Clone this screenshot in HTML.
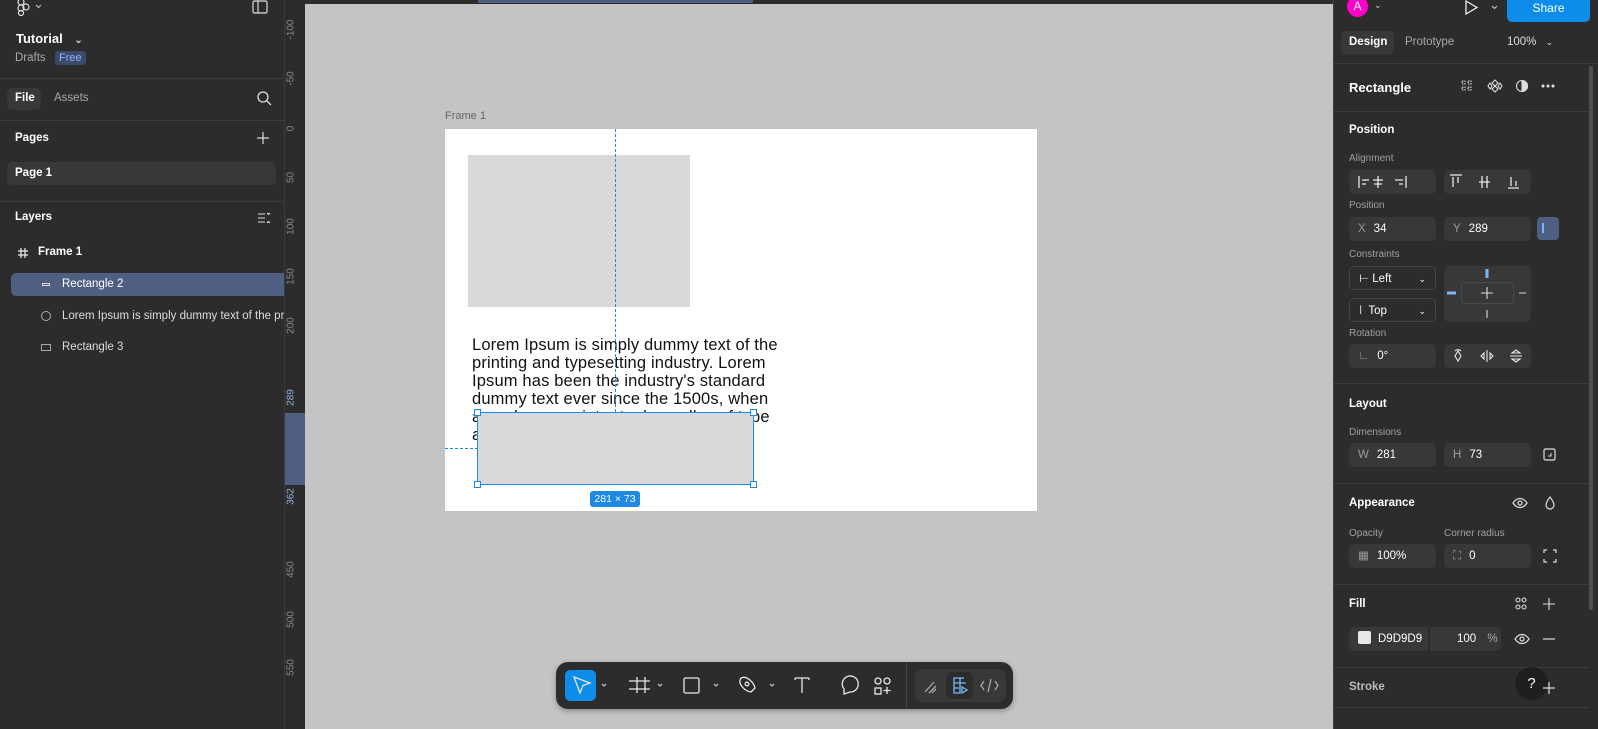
<!DOCTYPE html>
<html><head><meta charset="utf-8"><style>
*{box-sizing:border-box;margin:0;padding:0}
body{width:1598px;height:729px;overflow:hidden;background:#c4c4c4;font-family:"Liberation Sans",sans-serif;position:relative;color:#fff}
.a{position:absolute}
.lp{left:0;top:0;width:284px;height:729px;background:#2c2c2c}
.rp{left:1333px;top:0;width:265px;height:729px;background:#2c2c2c;border-left:1px solid #3a3a3a}
.hr{position:absolute;height:1px;background:#3d3d3d}
.b{font-weight:bold}
.g{color:#a8a8a8}
.inp{position:absolute;background:#383838;border-radius:5px;height:24px;font-size:11.5px;line-height:24px;padding-left:9px}
.inp i{font-style:normal;color:#9a9a9a;margin-right:8px}
.lbl{position:absolute;font-size:10px;color:#a0a0a0}
.rl{position:absolute;font-size:10px;color:#8a8a8a;transform:rotate(-90deg);transform-origin:center;width:30px;text-align:center}
</style></head><body>
<div class="a" style="left:284px;top:0;width:1049px;height:4px;background:#2c2c2c"></div>
<div class="a" style="left:478px;top:0;width:275px;height:3px;background:#4f5f82"></div>
<div class="a" style="left:284px;top:0;width:21px;height:729px;background:#2c2c2c;border-left:1px solid #3a3a3a"></div>
<div class="a" style="left:285px;top:413px;width:20px;height:72px;background:#4f5f82"></div>
<div class="rl" style="left:276px;top:24px">-100</div>
<div class="rl" style="left:276px;top:73px">-50</div>
<div class="rl" style="left:276px;top:123px">0</div>
<div class="rl" style="left:276px;top:172px">50</div>
<div class="rl" style="left:276px;top:221px">100</div>
<div class="rl" style="left:276px;top:271px">150</div>
<div class="rl" style="left:276px;top:320px">200</div>
<div class="rl" style="left:276px;top:392px;color:#8fb4e0">289</div>
<div class="rl" style="left:276px;top:491px;color:#8fb4e0">362</div>
<div class="rl" style="left:276px;top:564px">450</div>
<div class="rl" style="left:276px;top:614px">500</div>
<div class="rl" style="left:276px;top:662px">550</div>

<div class="a lp">
<svg class="a" style="left:16px;top:0" width="30" height="16"><g fill="none" stroke="#ddd" stroke-width="1.2"><circle cx="5" cy="2" r="3"/><circle cx="5" cy="8" r="3"/><circle cx="5" cy="13" r="2.5"/><circle cx="10" cy="7" r="3"/></g><path d="M20 5l2.5 2.5L25 5" stroke="#ccc" fill="none"/></svg>
<svg class="a" style="left:252px;top:0" width="16" height="14"><rect x="1" y="1" width="14" height="12" rx="1.5" fill="none" stroke="#ddd" stroke-width="1.2"/><line x1="6" y1="1" x2="6" y2="13" stroke="#ddd" stroke-width="1.2"/></svg>
<div class="a b" style="left:16px;top:31px;font-size:13px">Tutorial <span style="font-size:10px;margin-left:8px;color:#ccc">⌄</span></div>
<div class="a g" style="left:15px;top:52px;font-size:11.5px">Drafts</div>
<div class="a" style="left:55px;top:51px;background:#3b4a6b;color:#8cb6ff;font-size:11px;padding:1px 4px;border-radius:3px">Free</div>
<div class="hr" style="left:0;top:78px;width:284px"></div>
<div class="a" style="left:7px;top:88px;width:34px;height:22px;background:#383838;border-radius:5px"></div>
<div class="a b" style="left:15px;top:92px;font-size:11.5px">File</div>
<div class="a g" style="left:54px;top:92px;font-size:11.5px">Assets</div>
<svg class="a" style="left:256px;top:90px" width="16" height="16"><circle cx="7" cy="7" r="5" fill="none" stroke="#ddd" stroke-width="1.3"/><line x1="11" y1="11" x2="15" y2="15" stroke="#ddd" stroke-width="1.3"/></svg>
<div class="hr" style="left:0;top:120px;width:284px"></div>
<div class="a b" style="left:15px;top:132px;font-size:11.5px">Pages</div>
<svg class="a" style="left:256px;top:131px" width="14" height="14"><path d="M7 1v12M1 7h12" stroke="#ddd" stroke-width="1.2"/></svg>
<div class="a" style="left:7px;top:162px;width:269px;height:23px;background:#383838;border-radius:5px"></div>
<div class="a b" style="left:15px;top:167px;font-size:11.5px">Page 1</div>
<div class="hr" style="left:0;top:201px;width:284px"></div>
<div class="a b" style="left:15px;top:211px;font-size:11.5px">Layers</div>
<svg class="a" style="left:257px;top:211px" width="14" height="14"><path d="M1 3h7M1 7h7M1 11h7M10 2l1.5 1.5L13 2M10 12l1.5-1.5L13 12" stroke="#ddd" fill="none" stroke-width="1.1"/></svg>
<svg class="a" style="left:17px;top:247px" width="12" height="12"><path d="M4 1v10M8 1v10M1 4h10M1 8h10" stroke="#eee" stroke-width="1.2"/></svg>
<div class="a b" style="left:38px;top:246px;font-size:11.5px">Frame 1</div>
<div class="a" style="left:11px;top:273px;width:273px;height:23px;background:#4f5f82;border-radius:5px 0 0 5px"></div>
<div class="a" style="left:42px;top:283px;width:8px;height:3px;border:1px solid #ddd"></div>
<div class="a" style="left:62px;top:278px;font-size:11.5px">Rectangle 2</div>
<div class="a" style="left:41px;top:311px;width:10px;height:10px;border:1px solid #aaa;border-radius:50%"></div>
<div class="a" style="left:62px;top:310px;font-size:11.5px;white-space:nowrap;width:222px;overflow:hidden;color:#ddd">Lorem Ipsum is simply dummy text of the printing</div>
<div class="a" style="left:41px;top:344px;width:10px;height:7px;border:1px solid #aaa"></div>
<div class="a" style="left:62px;top:341px;font-size:11.5px;color:#ddd">Rectangle 3</div>
</div>

<div class="a" style="left:445px;top:110px;font-size:11px;color:#666">Frame 1</div>
<div class="a" style="left:445px;top:129px;width:592px;height:382px;background:#fff"></div>
<div class="a" style="left:468px;top:155px;width:222px;height:152px;background:#d9d9d9"></div>
<div class="a" style="left:472px;top:336px;width:308px;font-size:16.5px;letter-spacing:0.15px;line-height:18px;color:#111">Lorem Ipsum is simply dummy text of the printing and typesetting industry. Lorem Ipsum has been the industry's standard dummy text ever since the 1500s, when an unknown printer took a galley of type and</div>
<div class="a" style="left:615px;top:129px;width:0;height:283px;border-left:1px dashed #1e88e5"></div>
<div class="a" style="left:445px;top:448px;width:33px;height:0;border-top:1px dashed #1e88e5"></div>
<div class="a" style="left:477px;top:412px;width:277px;height:73px;background:#d9d9d9;border:1.5px solid #1e88e5"></div>
<div class="a" style="left:474px;top:409px;width:7px;height:7px;background:#fff;border:1px solid #1e88e5"></div>
<div class="a" style="left:750px;top:409px;width:7px;height:7px;background:#fff;border:1px solid #1e88e5"></div>
<div class="a" style="left:474px;top:481px;width:7px;height:7px;background:#fff;border:1px solid #1e88e5"></div>
<div class="a" style="left:750px;top:481px;width:7px;height:7px;background:#fff;border:1px solid #1e88e5"></div>
<div class="a" style="left:590px;top:491px;width:50px;height:16px;background:#1e88e5;border-radius:3px;font-size:10.5px;line-height:16px;text-align:center">281 × 73</div>

<div class="a" style="left:556px;top:662px;width:457px;height:47px;background:#2c2c2c;border-radius:12px;box-shadow:0 2px 6px rgba(0,0,0,.3)"></div>
<div class="a" style="left:906px;top:662px;width:1px;height:47px;background:#444"></div>
<div class="a" style="left:915px;top:669px;width:91px;height:33px;background:#383838;border-radius:8px"></div>
<div class="a" style="left:946px;top:672px;width:27px;height:27px;background:#2c2c2c;border-radius:6px"></div>
<div class="a" style="left:565px;top:670px;width:31px;height:31px;background:#0d8ce9;border-radius:5px"></div>
<svg class="a" style="left:556px;top:662px" width="457" height="47" fill="none" stroke="#e8e8e8" stroke-width="1.3">
<path d="M18 15l16 6-7 2.5-3 7.5z"/>
<path d="M46 22l2 2 2-2M102 22l2 2 2-2M158 22l2 2 2-2M214 22l2 2 2-2" stroke="#bbb"/>
<path d="M81 15v16M89 15v16M73 19h21M73 27h21"/>
<rect x="128" y="16" width="15" height="15" rx="1.5"/>
<path d="M185 16c6-3 13 5 14 10l-4 4c-6-1-14-8-10-14z"/><circle cx="191" cy="22" r="1.8"/>
<path d="M239 16h14M246 16v15M239 16v2M253 16v2"/>
<path d="M294 30a8 8 0 1 0-6-3v5z"/>
<circle cx="322" cy="19" r="3"/><circle cx="331" cy="19" r="3"/><rect x="319" y="26" width="6" height="6"/><path d="M331 25v7M327.5 28.5h7"/>
<path d="M369 30l9-10M373 31l7-7M376 31l4-4" stroke="#aaa"/>
<path d="M398 16h6v15h-6zM398 21h12M398 26h5M404 16h4" stroke="#7ab8f5"/><path d="M406 25l5 3-5 3z" stroke="#7ab8f5"/>
<path d="M428 19l-3 4.5 3 4.5M439 19l3 4.5-3 4.5M435 17l-3 13" stroke="#aaa"/>
</svg>

<div class="a rp">
<div class="a" style="left:13px;top:-4px;width:21px;height:21px;background:#f0c;border-radius:50%;font-size:12px;text-align:center;line-height:21px">A</div>
<div class="a" style="left:40px;top:0;font-size:9px;color:#ccc">⌄</div>
<svg class="a" style="left:130px;top:0" width="40" height="16"><path d="M2 1l11 6.5L2 14z" fill="none" stroke="#eee" stroke-width="1.3"/><path d="M28 6l2.5 2.5L33 6" stroke="#ccc" fill="none"/></svg>
<div class="a" style="left:173px;top:-4px;width:83px;height:26px;background:#0d8ce9;border-radius:5px;font-size:12px;text-align:center;line-height:24px">Share</div>
<div class="a" style="left:7px;top:31px;width:53px;height:23px;background:#383838;border-radius:5px"></div>
<div class="a b" style="left:15px;top:36px;font-size:11.5px">Design</div>
<div class="a g" style="left:71px;top:36px;font-size:11.5px">Prototype</div>
<div class="a" style="left:173px;top:36px;font-size:11.5px;color:#ddd">100% <span style="font-size:9px;margin-left:6px">⌄</span></div>
<div class="hr" style="left:0;top:63px;width:265px"></div>
<div class="a" style="left:255px;top:66px;width:4px;height:544px;background:#505050;border-radius:2px"></div>
<div class="a b" style="left:15px;top:80px;font-size:13px">Rectangle</div>
<svg class="a" style="left:125px;top:78px" width="100" height="16" fill="none" stroke="#ddd" stroke-width="1.1"><path d="M3 3h3v3H3zM9 3h3v3H9zM3 9h3v3H3zM9 9h3v3H9z" stroke-dasharray="1.5 1"/><path d="M36 2l3 3-3 3-3-3zM36 8l3 3-3 3-3-3zM31 5l2 3-2 3-2-3zM41 5l2 3-2 3-2-3z"/><circle cx="63" cy="8" r="5.5"/><path d="M63 2.5a5.5 5.5 0 0 1 0 11z" fill="#ddd"/><circle cx="84" cy="8" r="1" fill="#ddd"/><circle cx="89" cy="8" r="1" fill="#ddd"/><circle cx="94" cy="8" r="1" fill="#ddd"/></svg>
<div class="hr" style="left:0;top:111px;width:255px"></div>
<div class="a b" style="left:15px;top:124px;font-size:11.5px">Position</div>
<div class="lbl" style="left:15px;top:153px">Alignment</div>
<div class="inp" style="left:15px;top:170px;width:87px;padding:0"></div>
<div class="inp" style="left:110px;top:170px;width:87px;padding:0"></div>
<svg class="a" style="left:15px;top:170px" width="185" height="24" stroke="#e8e8e8" stroke-width="1.3" fill="none"><path d="M10 6v12M13 10h7M13 14h4M29 6v12M24 10h10M25 14h8M57 6v12M46 10h8M50 14h4"/><g transform="translate(95 0)"><path d="M6 5h12M9 7v10M14 7v6M38 6v12M43 6v12M35 12h11M64 18h11M67 7v9M72 11v5"/></g></svg>
<div class="lbl" style="left:15px;top:200px">Position</div>
<div class="inp" style="left:15px;top:217px;width:87px"><i>X</i>34</div>
<div class="inp" style="left:110px;top:217px;width:87px"><i>Y</i>289</div>
<div class="a" style="left:203px;top:217px;width:22px;height:23px;background:#4f5f82;border-radius:4px"></div>
<div class="a" style="left:208px;top:223px;width:2px;height:10px;background:#7ab8f5"></div>
<div class="lbl" style="left:15px;top:249px">Constraints</div>
<div class="inp" style="left:15px;top:266px;width:87px;background:#2c2c2c;border:1px solid #444">⊢ Left<span style="position:absolute;right:9px;font-size:9px">⌄</span></div>
<div class="inp" style="left:15px;top:298px;width:87px;background:#2c2c2c;border:1px solid #444"><span style="color:#ccc">I</span>&nbsp; Top<span style="position:absolute;right:9px;font-size:9px">⌄</span></div>
<div class="a" style="left:110px;top:266px;width:87px;height:56px;background:#383838;border-radius:5px"></div>
<div class="a" style="left:127px;top:282px;width:53px;height:22px;border:1px solid #4a4a4a;border-radius:3px"></div>
<svg class="a" style="left:110px;top:266px" width="87" height="56"><path d="M43 3v9" stroke="#7ab8f5" stroke-width="3"/><path d="M3 27h9" stroke="#7ab8f5" stroke-width="3"/><path d="M75 27h7M43 44v8M37 27h12M43 21v12" stroke="#ddd" stroke-width="1.1"/></svg>
<div class="lbl" style="left:15px;top:328px">Rotation</div>
<div class="inp" style="left:15px;top:344px;width:87px"><i>∟</i>0°</div>
<div class="inp" style="left:110px;top:344px;width:87px;padding:0"></div>
<svg class="a" style="left:110px;top:344px" width="87" height="24" stroke="#e8e8e8" fill="none" stroke-width="1.1"><path d="M14 7l-3 5 3 5 3-5zM11 7a4 4 0 0 1 6 0"/><path d="M43 6v12M40 9l-3 3 3 3zM46 9l3 3-3 3z"/><path d="M66 12h12M68 9l4-3 4 3zM68 15l4 3 4-3z"/></svg>
<div class="hr" style="left:0;top:383px;width:255px"></div>
<div class="a b" style="left:15px;top:398px;font-size:11.5px">Layout</div>
<div class="lbl" style="left:15px;top:427px">Dimensions</div>
<div class="inp" style="left:15px;top:443px;width:87px"><i>W</i>281</div>
<div class="inp" style="left:110px;top:443px;width:87px"><i>H</i>73</div>
<svg class="a" style="left:209px;top:448px" width="14" height="14"><rect x="1" y="1" width="11" height="11" rx="1.5" fill="none" stroke="#ddd" stroke-width="1.2"/><path d="M5 8h3V5" stroke="#ddd" fill="none"/></svg>
<div class="hr" style="left:0;top:483px;width:255px"></div>
<div class="a b" style="left:15px;top:497px;font-size:11.5px">Appearance</div>
<svg class="a" style="left:178px;top:495px" width="50" height="16" fill="none" stroke="#ddd" stroke-width="1.2"><path d="M1 8c4-6 10-6 14 0-4 6-10 6-14 0z"/><circle cx="8" cy="8" r="2"/><path d="M38 2c-3 4-4 6-4 8a4 4 0 0 0 8 0c0-2-1-4-4-8z"/></svg>
<div class="lbl" style="left:15px;top:528px">Opacity</div>
<div class="lbl" style="left:110px;top:528px">Corner radius</div>
<div class="inp" style="left:15px;top:544px;width:87px"><i>▦</i>100%</div>
<div class="inp" style="left:110px;top:544px;width:87px"><i>⛶</i>0</div>
<svg class="a" style="left:209px;top:549px" width="14" height="14" fill="none" stroke="#ddd" stroke-width="1.2"><path d="M1 4V1h3M10 1h3v3M13 10v3h-3M4 13H1v-3"/></svg>
<div class="hr" style="left:0;top:584px;width:255px"></div>
<div class="a b" style="left:15px;top:598px;font-size:11.5px">Fill</div>
<svg class="a" style="left:181px;top:597px" width="45" height="14" fill="none" stroke="#ddd" stroke-width="1.1"><circle cx="3" cy="3" r="2"/><circle cx="9" cy="3" r="2"/><circle cx="3" cy="10" r="2"/><circle cx="9" cy="10" r="2"/><path d="M34 1v12M28 7h12"/></svg>
<div class="inp" style="left:15px;top:627px;width:152px"><span style="display:inline-block;width:13px;height:13px;background:#e8e8e8;border-radius:2px;vertical-align:-2px;margin-right:7px"></span>D9D9D9</div>
<div class="a" style="left:94px;top:627px;width:2px;height:24px;background:#2c2c2c"></div>
<div class="a" style="left:123px;top:627px;font-size:11.5px;line-height:24px">100 <span style="margin-left:8px;color:#aaa">%</span></div>
<svg class="a" style="left:180px;top:632px" width="45" height="14" fill="none" stroke="#ddd" stroke-width="1.2"><path d="M1 7c4-6 10-6 14 0-4 6-10 6-14 0z"/><circle cx="8" cy="7" r="2"/><path d="M29 7h12"/></svg>
<div class="hr" style="left:0;top:667px;width:255px"></div>
<div class="a b" style="left:15px;top:681px;font-size:11.5px;color:#bbb">Stroke</div>
<div class="a" style="left:181px;top:667px;width:33px;height:33px;background:#1e1e1e;border-radius:50%;font-size:15px;text-align:center;line-height:33px">?</div>
<svg class="a" style="left:208px;top:681px" width="14" height="14"><path d="M7 1v12M1 7h12" stroke="#ddd" stroke-width="1.2"/></svg>
<div class="hr" style="left:0;top:707px;width:255px"></div>
</div>
</body></html>
